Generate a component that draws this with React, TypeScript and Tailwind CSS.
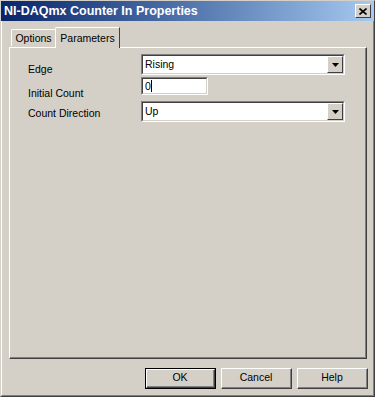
import React from "react";

const font = { fontFamily: '"Liberation Sans", Arial, sans-serif' };

function DropArrow() {
  return (
    <div className="w-[16px] h-[17px] bg-[#d4d0c8] border border-t-white border-l-white border-r-[#404040] border-b-[#404040] flex items-center justify-center">
      <svg width="7" height="4" viewBox="0 0 7 4">
        <path d="M0 0 H7 L3.5 4 Z" fill="#000" />
      </svg>
    </div>
  );
}

function Combo({ value }: { value: string }) {
  return (
    <div className="w-[204px] h-[21px] border border-t-[#808080] border-l-[#808080] border-r-white border-b-white">
      <div className="w-full h-full border border-t-[#404040] border-l-[#404040] border-r-[#d4d0c8] border-b-[#d4d0c8] bg-white flex items-center">
        <span className="flex-1 pl-[2px] text-[10.5px] text-black leading-none">{value}</span>
        <DropArrow />
      </div>
    </div>
  );
}

function Btn({ label, def }: { label: string; def?: boolean }) {
  const inner = (
    <div className="w-full h-full border border-t-white border-l-white border-r-[#404040] border-b-[#404040]">
      <div className="w-full h-full border-r border-b border-r-[#808080] border-b-[#808080] flex items-center justify-center text-[10.5px] text-black">
        {label}
      </div>
    </div>
  );
  return (
    <div className={"w-[71px] h-[21px] bg-[#d4d0c8] " + (def ? "border border-black" : "")}>
      {inner}
    </div>
  );
}

export default function App() {
  return (
    <div style={font} className="w-[375px] h-[397px] bg-[#d4d0c8] border border-t-[#d4d0c8] border-l-[#d4d0c8] border-r-[#404040] border-b-[#404040]">
      <div className="w-full h-full border border-t-white border-l-white border-r-[#808080] border-b-[#808080] flex flex-col">
        {/* Title bar */}
        <div className="h-[20px] mx-[-1px] mt-[-1px] bg-gradient-to-r from-[#0a246a] to-[#a6caf0] flex items-center pl-[3px] pr-[3px]">
          <span className="flex-1 text-white font-bold text-[12.5px] leading-none">NI-DAQmx Counter In Properties</span>
          <div className="w-[16px] h-[14px] bg-[#d4d0c8] border border-t-white border-l-white border-r-[#404040] border-b-[#404040] flex items-center justify-center">
            <svg width="8" height="7" viewBox="0 0 8 7">
              <path d="M0.5 0.5 L7.5 6.5 M7.5 0.5 L0.5 6.5" stroke="#000" strokeWidth="1.6" />
            </svg>
          </div>
        </div>

        {/* Tabs */}
        <div className="mt-[6px] ml-[7px] h-[20px] flex items-end">
          <div className="ml-[2px] mb-[1px] h-[17px] w-[45px] border-t border-l border-t-white border-l-white border-r border-r-[#404040] rounded-tl-[2px] flex items-center justify-center text-[10.5px] text-black">
            <span className="pt-[2px]">Options</span>
          </div>
          <div className="relative z-10 mb-[-1px] ml-[-1px] h-[21px] w-[65px] bg-[#d4d0c8] border-t border-l border-t-white border-l-white border-r border-r-[#404040] rounded-tl-[2px] flex items-start justify-center text-[10.5px] text-black">
            <span className="pt-[3px]">Parameters</span>
          </div>
        </div>

        {/* Panel */}
        <div className="ml-[7px] w-[358px] h-[312px] border border-t-white border-l-white border-r-[#404040] border-b-[#404040]">
          <div className="w-full h-full border-r border-b border-r-[#808080] border-b-[#808080] pt-[6px] pl-[18px] flex flex-col">
            <div className="flex items-center h-[21px]">
              <span className="w-[113px] text-[10.5px] text-black pt-[10px]">Edge</span>
              <Combo value="Rising" />
            </div>
            <div className="flex items-center h-[18px] mt-[2px]">
              <span className="w-[113px] text-[10.5px] text-black pt-[15px]">Initial Count</span>
              <div className="w-[67px] h-[18px] border border-t-[#808080] border-l-[#808080] border-r-white border-b-white">
                <div className="w-full h-full border border-t-[#404040] border-l-[#404040] border-r-[#d4d0c8] border-b-[#d4d0c8] bg-white flex items-center pl-[2px] text-[10.5px] text-black leading-none">
                  0<span className="inline-block w-[1px] h-[12px] bg-black"></span>
                </div>
              </div>
            </div>
            <div className="flex items-center h-[21px] mt-[6px]">
              <span className="w-[113px] text-[10.5px] text-black pt-[5px]">Count Direction</span>
              <Combo value="Up" />
            </div>
          </div>
        </div>

        {/* Buttons */}
        <div className="mt-[9px] flex justify-end gap-[5px] pr-[5px]">
          <Btn label="OK" def />
          <Btn label="Cancel" />
          <Btn label="Help" />
        </div>
      </div>
    </div>
  );
}
